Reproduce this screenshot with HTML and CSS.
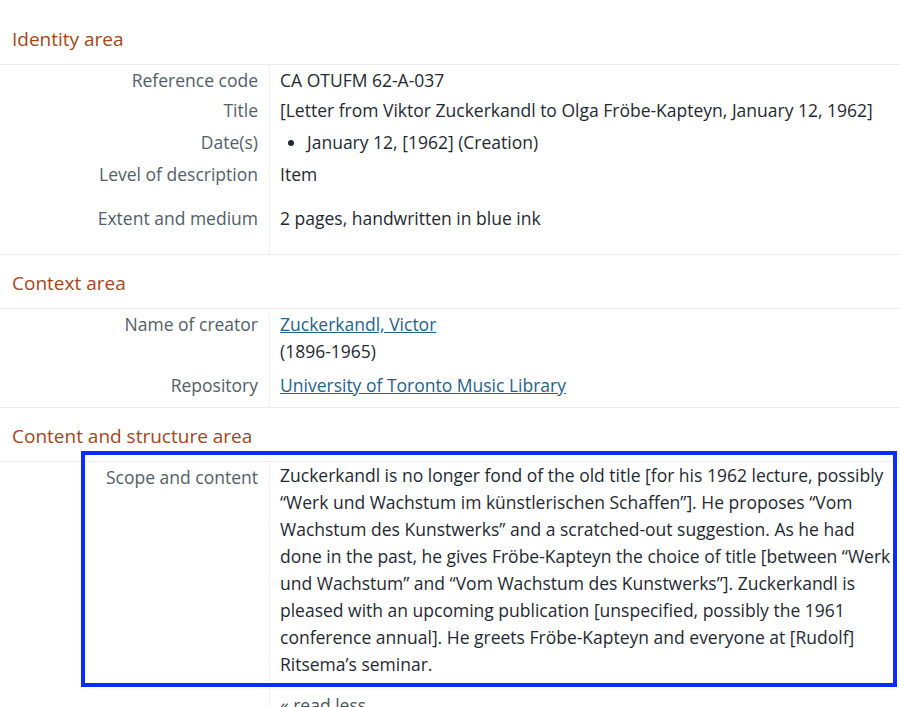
FILE: index.html
```html
<!DOCTYPE html>
<html lang="en">
<head>
    <meta charset="UTF-8">
    <meta name="viewport" content="width=device-width, initial-scale=1.0">
    <title>Letter from Viktor Zuckerkandl to Olga Fröbe-Kapteyn</title>
    <link rel="stylesheet" href="styles.css">
</head>
<body>

<!-- Identity area -->
<section class="area first">
    <h2>Identity area</h2>
    <div class="field">
        <h3>Reference code</h3>
        <div class="value">CA OTUFM 62-A-037</div>
    </div>
    <div class="field">
        <h3>Title</h3>
        <div class="value">[Letter from Viktor Zuckerkandl to Olga Fröbe-Kapteyn, January 12, 1962]</div>
    </div>
    <div class="field dates">
        <h3>Date(s)</h3>
        <div class="value">
            <ul>
                <li>January 12, [1962] (Creation)</li>
            </ul>
        </div>
    </div>
    <div class="field">
        <h3>Level of description</h3>
        <div class="value">Item</div>
    </div>
    <div class="field extent">
        <h3>Extent and medium</h3>
        <div class="value">2 pages, handwritten in blue ink</div>
    </div>
</section>

<!-- Context area -->
<section class="area">
    <h2>Context area</h2>
    <div class="field creator">
        <h3>Name of creator</h3>
        <div class="value">
            <a href="#">Zuckerkandl, Victor</a>
            <div class="dates-of">(1896-1965)</div>
        </div>
    </div>
    <div class="field repository">
        <h3>Repository</h3>
        <div class="value"><a href="#">University of Toronto Music Library</a></div>
    </div>
</section>

<!-- Content and structure area -->
<section class="area last">
    <h2>Content and structure area</h2>
    <div class="field scope">
        <div class="highlight"></div>
        <h3>Scope and content</h3>
        <div class="value">
            <p>Zuckerkandl is no longer fond of the old title [for his 1962 lecture, possibly “Werk und Wachstum im künstlerischen Schaffen”]. He proposes “Vom Wachstum des Kunstwerks” and a scratched-out suggestion. As he had done in the past, he gives Fröbe-Kapteyn the choice of title [between “Werk und Wachstum” and “Vom Wachstum des Kunstwerks”]. Zuckerkandl is pleased with an upcoming publication [unspecified, possibly the 1961 conference annual]. He greets Fröbe-Kapteyn and everyone at [Rudolf] Ritsema’s seminar.</p>
            <a class="read-less" href="#">« read less</a>
        </div>
    </div>
</section>

</body>
</html>
```

FILE: styles.css
```css
html, body {
    overflow: hidden;
}
body {
    margin: 0;
    padding-top: 11px;
    font-family: "Open Sans", "Liberation Sans", sans-serif;
    font-size: 17.5px;
    line-height: 24px;
    color: #1f2933;
    background: #fff;
}
.area {
    border-bottom: 1px solid #ededed;
}
.area.last {
    border-bottom: none;
}
.area h2 {
    margin: 0;
    padding: 15px 12px 11px;
    font-size: 19px;
    line-height: 27px;
    font-weight: normal;
    color: #a3461a;
    border-bottom: 1px solid #ededed;
}
.field {
    display: flex;
    position: relative;
}
.field h3 {
    flex: 0 0 270px;
    box-sizing: border-box;
    margin: 0;
    padding: 3px 11px 3px 0;
    text-align: right;
    font-size: 17.5px;
    font-weight: normal;
    color: #535e69;
    border-right: 1px solid #f1f1f1;
}
.field .value {
    flex: 1;
    padding: 3px 3px 3px 10px;
}
.field.dates h3,
.field.dates .value {
    padding-top: 5px;
    padding-bottom: 5px;
}
.field.extent h3,
.field.extent .value {
    padding-top: 17px;
    padding-bottom: 24px;
}
.field.creator h3,
.field.creator .value {
    padding-bottom: 8px;
}
.field.repository h3,
.field.repository .value {
    padding-top: 2px;
    padding-bottom: 10px;
}
.dates-of {
    margin-top: 3px;
}
ul {
    margin: 0;
    padding-left: 27px;
}
a {
    color: #24628c;
}
.field.scope h3 {
    padding-top: 2px;
    padding-bottom: 0;
    line-height: 27px;
}
.field.scope .value {
    padding-top: 0;
    padding-bottom: 0;
}
.field.scope p {
    margin: 0 0 15px;
    line-height: 27px;
}
.read-less {
    text-decoration: none;
    color: #4a5560;
}
/* annotation box over the scope row */
.highlight {
    position: absolute;
    left: 81px;
    top: -11px;
    width: 816px;
    height: 236px;
    box-sizing: border-box;
    border: 4px solid #0c2cff;
    pointer-events: none;
}
```
